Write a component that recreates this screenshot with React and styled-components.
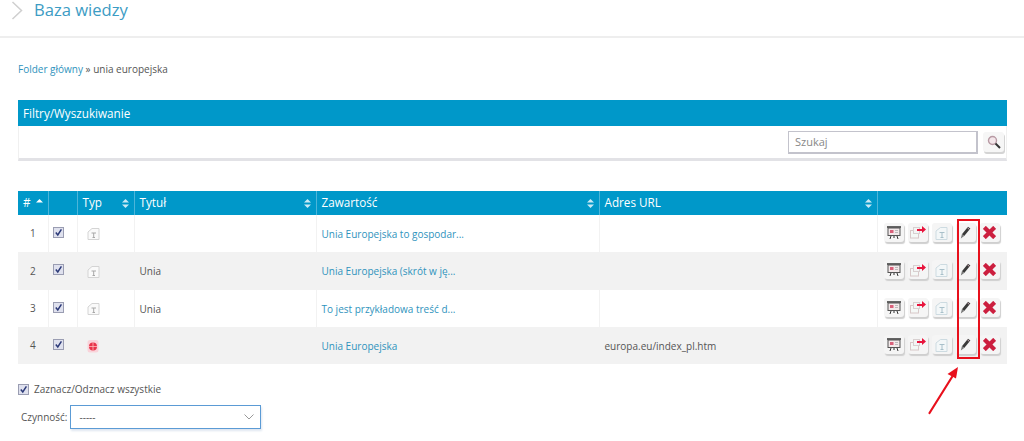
import React from 'react';
import styled, { createGlobalStyle } from 'styled-components';

const Global = createGlobalStyle`
  html, body { margin: 0; padding: 0; background: #fff; }
  body { font-family: "Open Sans", "Liberation Sans", sans-serif; font-size: 10px; color: #555; overflow: hidden; }
  * { box-sizing: border-box; }
`;

const Page = styled.div`
  position: relative;
  width: 1024px;
  height: 441px;
  overflow: hidden;
`;
const Header = styled.header`
  height: 38px;
  border-bottom: 2px solid #eeeeee;
  display: flex;
  align-items: flex-start;
  padding-left: 11px;
`;
const HeaderChevron = styled.svg`
  width: 12px;
  height: 19px;
  margin-top: 1px;
`;
const Title = styled.h1`
  margin: 0 0 0 11px;
  font-size: 16.6px;
  line-height: 19px;
  font-weight: 400;
  color: #3c9cc4;
`;
const Main = styled.main`
  padding: 0 17px 0 18px;
`;
const Crumbs = styled.div`
  margin-top: 23px;
  height: 16px;
  line-height: 16px;
  font-size: 10px;
  color: #555;
`;
const Link = styled.a`
  color: #2f93bd;
`;
const Panel = styled.section`
  margin-top: 23px;
  height: 61px;
  border-bottom: 3px solid #e2e2e6;
  border-left: 1px solid #f0f0f0;
  border-right: 1px solid #f0f0f0;
`;
const PanelHead = styled.div`
  margin: 0 -1px;
  height: 26px;
  background: #0098c9;
  color: #fff;
  font-size: 11.7px;
  line-height: 26px;
  padding-left: 5px;
`;
const SearchRow = styled.div`
  display: flex;
  justify-content: flex-end;
  align-items: flex-start;
  gap: 5px;
  padding: 5px 2px 0 0;
`;
const SearchInput = styled.div`
  width: 190px;
  height: 23px;
  border: 1px solid #c3c3cc;
  border-right-width: 2px;
  border-bottom-width: 2px;
  color: #888;
  font-size: 11px;
  line-height: 20px;
  padding-left: 6px;
`;
const SearchButton = styled.div`
  width: 21px;
  height: 20px;
  margin-top: 1px;
  border-radius: 3px;
  background: #f6f6f6;
  box-shadow: 1px 2px 0 #d4d4d4;
  display: flex;
  align-items: center;
  justify-content: center;
`;
const Table = styled.table`
  margin-top: 30px;
  width: 989px;
  border-collapse: collapse;
  table-layout: fixed;
`;
const Th = styled.th`
  position: relative;
  height: 24px;
  padding: 0 0 2px 5px;
  background: #0098c9;
  color: #fff;
  font-size: 11.7px;
  font-weight: 400;
  text-align: left;
  border-right: 1px solid #4db5d9;
  &:last-child { border-right: 0; }
`;
const SortIcon = styled.svg`
  position: absolute;
  right: 5px;
  top: 8px;
  width: 7px;
  height: 9px;
`;
const Tr = styled.tr`
  height: ${p => p.$h}px;
  background: ${p => (p.$alt ? '#f2f2f2' : '#fff')};
`;
const Td = styled.td`
  padding: 0 0 0 5px;
  font-size: 10px;
  color: #555;
  border-right: 1px solid #f2f2f2;
  vertical-align: middle;
  text-align: ${p => (p.$center ? 'center' : 'left')};
  white-space: nowrap;
  &:last-child { border-right: 0; padding: 0; }
`;
const CellNum = styled(Td)`
  padding: 0 0 1px 0;
`;
const CheckCell = styled(Td)`
  padding: 0 0 3px 4px;
`;
const TypeCell = styled(Td)`
  padding: 3px 0 0 9px;
`;
const Check = styled.svg`
  display: block;
  width: 11px;
  height: 11px;
`;
const Actions = styled.div`
  display: flex;
  gap: 4px;
  padding-left: 6px;
  padding-bottom: 3px;
`;
const ActionButton = styled.div`
  width: 20px;
  height: 19px;
  border-radius: 3px;
  background: #f5f5f5;
  box-shadow: 1px 2px 1px #cfcfcf;
  display: flex;
  align-items: center;
  justify-content: center;
`;
const SelectAll = styled.label`
  display: flex;
  align-items: center;
  gap: 5px;
  margin-top: 18px;
  height: 14px;
  color: #555;
  font-size: 10px;
`;
const ActionRow = styled.div`
  display: flex;
  align-items: center;
  gap: 3px;
  margin-top: 9px;
  padding-left: 3px;
  font-size: 10px;
`;
const Select = styled.div`
  width: 191px;
  height: 24px;
  border: 1px solid #5b9bd5;
  box-shadow: 1px 2px 2px #dfe6f0;
  display: flex;
  align-items: center;
  justify-content: space-between;
  padding: 0 6px 0 8px;
  color: #555;
  font-size: 10px;
`;
const RedBox = styled.div`
  position: absolute;
  left: 957px;
  top: 219px;
  width: 23px;
  height: 140px;
  border: 2.5px solid #e8101c;
`;
const Arrow = styled.svg`
  position: absolute;
  left: 925px;
  top: 362px;
  width: 40px;
  height: 56px;
`;

const CheckBox = () => (
  <Check viewBox="0 0 11 11">
    <rect x=".5" y=".5" width="10" height="10" fill="#dfe1ee" stroke="#9a9db2" />
    <path d="M2.8 5.5 L4.8 8 L8.4 2.4" fill="none" stroke="#2c3a78" strokeWidth="1.5" />
  </Check>
);
const Sort = ({ up }) => (
  <SortIcon viewBox="0 0 7 9">
    <path d="M3.5 0 L7 3.6 H0 Z" fill={up ? '#fff' : '#cbeaf5'} />
    {!up && <path d="M3.5 9 L7 5.4 H0 Z" fill="#cbeaf5" />}
  </SortIcon>
);
const DocIcon = () => (
  <svg width="13" height="13" viewBox="0 0 13 13">
    <path d="M1 12.5 H12 V1.5 H5 L1 5 Z" fill="#fafafa" stroke="#d4d4d4" />
    <path d="M4.5 6 H9 M6.7 6 V10.5 M5.5 10.5 H8" fill="none" stroke="#a8a8a8" />
  </svg>
);
const GlobeIcon = () => (
  <svg width="12" height="14" viewBox="0 0 12 14">
    <rect x=".5" y="1" width="11" height="12.5" rx="2.5" fill="#f9d3da" />
    <circle cx="6" cy="7.5" r="4" fill="#e8334a" />
    <path d="M2 7.5 H10 M6 3.5 V11.5" stroke="#fbb" strokeWidth=".8" />
  </svg>
);
const PresentIcon = () => (
  <svg width="16" height="15" viewBox="0 0 16 15">
    <path d="M1 2 H15" stroke="#333" strokeWidth="1.5" />
    <rect x="2" y="3" width="12" height="7.5" fill="#f3e9ea" stroke="#555" />
    <rect x="4" y="5" width="3.5" height="3" fill="#d9607a" />
    <path d="M9 5.5 H12 M9 7.5 H12" stroke="#bbb" />
    <path d="M5 11 L4 14 M11 11 L12 14 M8 11 V13" stroke="#333" />
  </svg>
);
const MoveIcon = () => (
  <svg width="16" height="14" viewBox="0 0 16 14">
    <rect x=".5" y="5.5" width="8" height="7.5" fill="#f4f8f6" stroke="#d8c8c8" />
    <rect x="3.5" y="2.5" width="6" height="6" fill="#f4f4f4" stroke="#d8d0d0" />
    <path d="M7 5 H12 V2 L16 5.5 L12 9 V7 H7 Z" fill="#e8143c" transform="translate(0 -1)" />
  </svg>
);
const FileIcon = () => (
  <svg width="13" height="15" viewBox="0 0 13 15">
    <path d="M1 14.5 H12 V2.5 H5.5 L1 6 Z" fill="#f3f7f8" stroke="#cddbe1" />
    <path d="M4.5 7.5 H9.5 M7 7.5 V12.5 M5.5 12.5 H8.5" fill="none" stroke="#a9c0ca" />
  </svg>
);
const PencilIcon = () => (
  <svg width="11" height="13" viewBox="0 0 11 13">
    <path d="M8 .8 L10.4 2.6 L4.2 10 L1.9 8.2 Z" fill="#3a3a3a" />
    <path d="M7.4 1.8 L9.6 3.6" stroke="#c9a9b2" strokeWidth="1" />
    <path d="M1.9 8.2 L4.2 10 L.8 12.4 Z" fill="#777" />
  </svg>
);
const CrossIcon = () => (
  <svg width="13" height="13" viewBox="0 0 13 13">
    <path d="M2.8 2.8 L10.2 10.2 M10.2 2.8 L2.8 10.2" stroke="#cc1f3f" strokeWidth="4.2" strokeLinecap="square" />
  </svg>
);
const MagnifierIcon = () => (
  <svg width="14" height="14" viewBox="0 0 14 14">
    <circle cx="5.5" cy="5.5" r="4" fill="#f3e6ea" stroke="#b89aa4" strokeWidth="1.4" />
    <path d="M8.5 8.5 L13 13" stroke="#333" strokeWidth="2" />
  </svg>
);

const rows = [
  { id: 1, h: 37, icon: DocIcon, title: '', body: 'Unia Europejska to gospodar...', url: '' },
  { id: 2, h: 38, icon: DocIcon, title: 'Unia', body: 'Unia Europejska (skrót w ję...', url: '' },
  { id: 3, h: 37, icon: DocIcon, title: 'Unia', body: 'To jest przykładowa treść d...', url: '' },
  { id: 4, h: 37, icon: GlobeIcon, title: '', body: 'Unia Europejska', url: 'europa.eu/index_pl.htm' },
];
const actions = [PresentIcon, MoveIcon, FileIcon, PencilIcon, CrossIcon];
const columns = [30, 29, 57, 182, 283, 278, 130];

export default function App() {
  return (
    <Page>
      <Global />
      <Header>
        <HeaderChevron viewBox="0 0 12 19">
          <path d="M1.5 1 L10.5 9.5 L1.5 18" fill="none" stroke="#cfcfcf" strokeWidth="1.5" />
        </HeaderChevron>
        <Title>Baza wiedzy</Title>
      </Header>
      <Main>
        <Crumbs><Link>Folder główny</Link> » unia europejska</Crumbs>
        <Panel>
          <PanelHead>Filtry/Wyszukiwanie</PanelHead>
          <SearchRow>
            <SearchInput>Szukaj</SearchInput>
            <SearchButton><MagnifierIcon /></SearchButton>
          </SearchRow>
        </Panel>
        <Table>
          <colgroup>{columns.map((w, i) => <col key={i} style={{ width: w }} />)}</colgroup>
          <thead>
            <tr>
              <Th>#<Sort up /></Th>
              <Th />
              <Th>Typ<Sort /></Th>
              <Th>Tytuł<Sort /></Th>
              <Th>Zawartość<Sort /></Th>
              <Th>Adres URL<Sort /></Th>
              <Th />
            </tr>
          </thead>
          <tbody>
            {rows.map((r, i) => (
              <Tr key={r.id} $h={r.h} $alt={i % 2 === 1}>
                <CellNum $center>{r.id}</CellNum>
                <CheckCell><CheckBox /></CheckCell>
                <TypeCell><r.icon /></TypeCell>
                <Td>{r.title}</Td>
                <Td><Link>{r.body}</Link></Td>
                <Td>{r.url}</Td>
                <Td>
                  <Actions>
                    {actions.map((Icon, k) => <ActionButton key={k}><Icon /></ActionButton>)}
                  </Actions>
                </Td>
              </Tr>
            ))}
          </tbody>
        </Table>
        <SelectAll><CheckBox /> Zaznacz/Odznacz wszystkie</SelectAll>
        <ActionRow>
          Czynność:
          <Select>
            -----
            <svg width="10" height="6" viewBox="0 0 10 6">
              <path d="M.5 .5 L5 5 L9.5 .5" fill="none" stroke="#999" />
            </svg>
          </Select>
        </ActionRow>
      </Main>
      <RedBox />
      <Arrow viewBox="0 0 40 56">
        <path d="M4.5 51 L27 15" stroke="#e8101c" strokeWidth="2.2" strokeLinecap="round" />
        <path d="M33 5 L31 16.5 L22.5 12 Z" fill="#e8101c" />
      </Arrow>
    </Page>
  );
}
